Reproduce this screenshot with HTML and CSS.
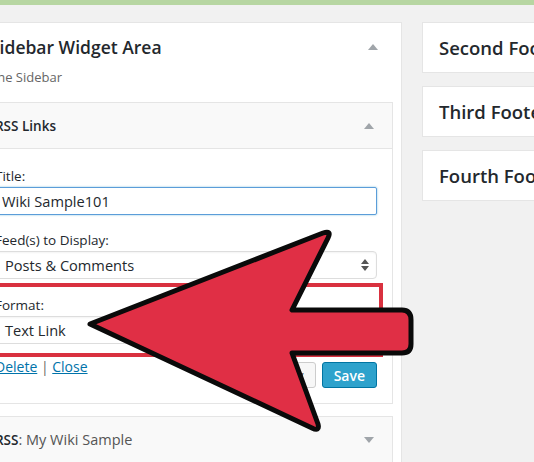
FILE: index.html
```html
<!DOCTYPE html>
<html lang="en">
<head>
    <meta charset="UTF-8">
    <title>Widgets</title>
    <link rel="stylesheet" href="styles.css">
</head>
<body>
    <div class="topbar"></div>

    <div class="columns">
        <div class="sidebar">
            <div class="sidebar-head">
                <h2>Sidebar Widget Area</h2>
                <span class="toggle up"></span>
            </div>
            <p class="sidebar-desc">The Sidebar</p>

            <div class="widget open">
                <div class="widget-top">
                    <h3>RSS Links</h3>
                    <span class="toggle up"></span>
                </div>
                <div class="widget-inside">
                    <label class="field-label">Title:</label>
                    <div class="input focus">Wiki Sample101</div>

                    <label class="field-label">Feed(s) to Display:</label>
                    <div class="input select">
                        <span>Posts &amp; Comments</span>
                        <svg class="updown" width="8" height="12" viewBox="0 0 8 12"><path d="M4 0L8 5H0z M0 7H8L4 12z" fill="#555"/></svg>
                    </div>

                    <div class="highlight">
                        <label class="field-label">Format:</label>
                        <div class="input select">
                            <span>Text Link</span>
                        </div>
                    </div>

                    <div class="widget-controls">
                        <div class="links"><a href="#">Delete</a> | <a href="#">Close</a></div>
                        <div class="buttons">
                            <button class="btn">Apply</button>
                            <button class="btn primary">Save</button>
                        </div>
                    </div>
                </div>
            </div>

            <div class="widget">
                <div class="widget-top">
                    <h3>RSS<span class="sub">: My Wiki Sample</span></h3>
                    <span class="toggle down"></span>
                </div>
            </div>
        </div>

        <div class="side-list">
            <div class="area">Second Footer Widget Area</div>
            <div class="area">Third Footer Widget Area</div>
            <div class="area">Fourth Footer Widget Area</div>
        </div>
    </div>

    <!-- big red arrow pointing at the Format field -->
    <svg class="arrow" width="534" height="462" viewBox="0 0 534 462">
        <path d="M90 324 L323 233 Q332 230 328 238 L292 310 L402 310 Q411 310 411 320 L411 344 Q411 353 402 353 L292 353 L318 424 Q320 432 312 428 Z"
              fill="#e02f45" stroke="#0a0a0a" stroke-width="5" stroke-linejoin="round"/>
    </svg>
</body>
</html>
```

FILE: styles.css
```css
body {
    margin: 0;
    background: #f1f1f1;
    font-family: 'Open Sans', sans-serif;
    color: #23282d;
    overflow: hidden;
    position: relative;
    height: 462px;
}

.topbar {
    height: 5px;
    background: #b7d6a2;
}

.columns {
    display: flex;
    gap: 20px;
    margin-left: -26px;
    padding-top: 17px;
}

.sidebar {
    flex: 0 0 428px;
    box-sizing: border-box;
    background: #fff;
    border: 1px solid #e5e5e5;
    height: 460px;
}

.sidebar-head {
    display: flex;
    justify-content: space-between;
    align-items: center;
    padding: 12px 23px 0 15px;
}

.sidebar-head h2 {
    margin: 0;
    font-size: 17.5px;
    font-weight: 600;
    line-height: 24px;
}

.sidebar-desc {
    margin: 8px 0 0 15px;
    font-size: 13px;
    line-height: 20px;
    color: #666;
}

.toggle {
    width: 0;
    height: 0;
    border-left: 5px solid transparent;
    border-right: 5px solid transparent;
}
.toggle.up { border-bottom: 6px solid #a0a5aa; }
.toggle.down { border-top: 6px solid #a0a5aa; }

.widget {
    margin: 15px 8px 0 4px;
    border: 1px solid #e5e5e5;
    background: #fff;
}
.widget + .widget {
    margin-top: 12px;
}

.widget-top {
    display: flex;
    justify-content: space-between;
    align-items: center;
    height: 45px;
    padding: 0 18px 0 15px;
    background: #f9f9f9;
}

.widget.open .widget-top {
    border-bottom: 1px solid #e5e5e5;
}

.widget-top h3 {
    margin: 0;
    font-size: 13.5px;
    font-weight: 600;
}
.widget-top .sub {
    font-size: 14.5px;
    font-weight: 400;
    color: #555;
}

.widget-inside {
    padding: 17px 15px 15px;
}

.field-label {
    display: block;
    font-size: 13.5px;
    line-height: 20px;
    margin-bottom: 1px;
}

.input {
    box-sizing: border-box;
    height: 28px;
    border: 1px solid #ddd;
    border-radius: 2px;
    padding: 0 6px;
    font-size: 14.6px;
    line-height: 26px;
    margin-bottom: 15px;
    box-shadow: inset 0 1px 2px rgba(0,0,0,0.05);
}
.input.focus {
    border-color: #5b9dd9;
    box-shadow: 0 0 2px rgba(30,140,190,0.6);
}
.input.select {
    display: flex;
    justify-content: space-between;
    align-items: center;
    border-radius: 4px;
    padding: 0 7px 0 9px;
}

.highlight {
    position: relative;
    padding-top: 1px;
}
.highlight::before {
    content: '';
    position: absolute;
    top: -11px;
    bottom: -13px;
    left: -30px;
    right: -6px;
    border: 4px solid #d9313f;
}
.highlight .input {
    margin-bottom: 0;
}

.widget-controls {
    display: flex;
    justify-content: space-between;
    margin-top: 14px;
    font-size: 14px;
    line-height: 18px;
    color: #666;
}

.widget-controls a {
    color: #0073aa;
}

.buttons {
    display: flex;
    gap: 6px;
    margin-top: 4px;
}

.btn {
    height: 26px;
    padding: 0 11px;
    font-family: 'Open Sans', sans-serif;
    font-size: 14px;
    border: 1px solid #ccc;
    border-radius: 3px;
    background: #f7f7f7;
    color: #555;
}
.btn.primary {
    background: #2ea2cc;
    border-color: #0074a2;
    color: #fff;
    font-weight: 600;
    padding: 0 11px;
}

.side-list {
    flex: 0 0 428px;
    display: flex;
    flex-direction: column;
    gap: 13px;
}

.area {
    box-sizing: border-box;
    height: 51px;
    padding-left: 16px;
    background: #fff;
    border: 1px solid #e5e5e5;
    font-size: 18.5px;
    font-weight: 600;
    line-height: 49px;
    white-space: nowrap;
}

.arrow {
    position: absolute;
    top: 0;
    left: 0;
}
```
